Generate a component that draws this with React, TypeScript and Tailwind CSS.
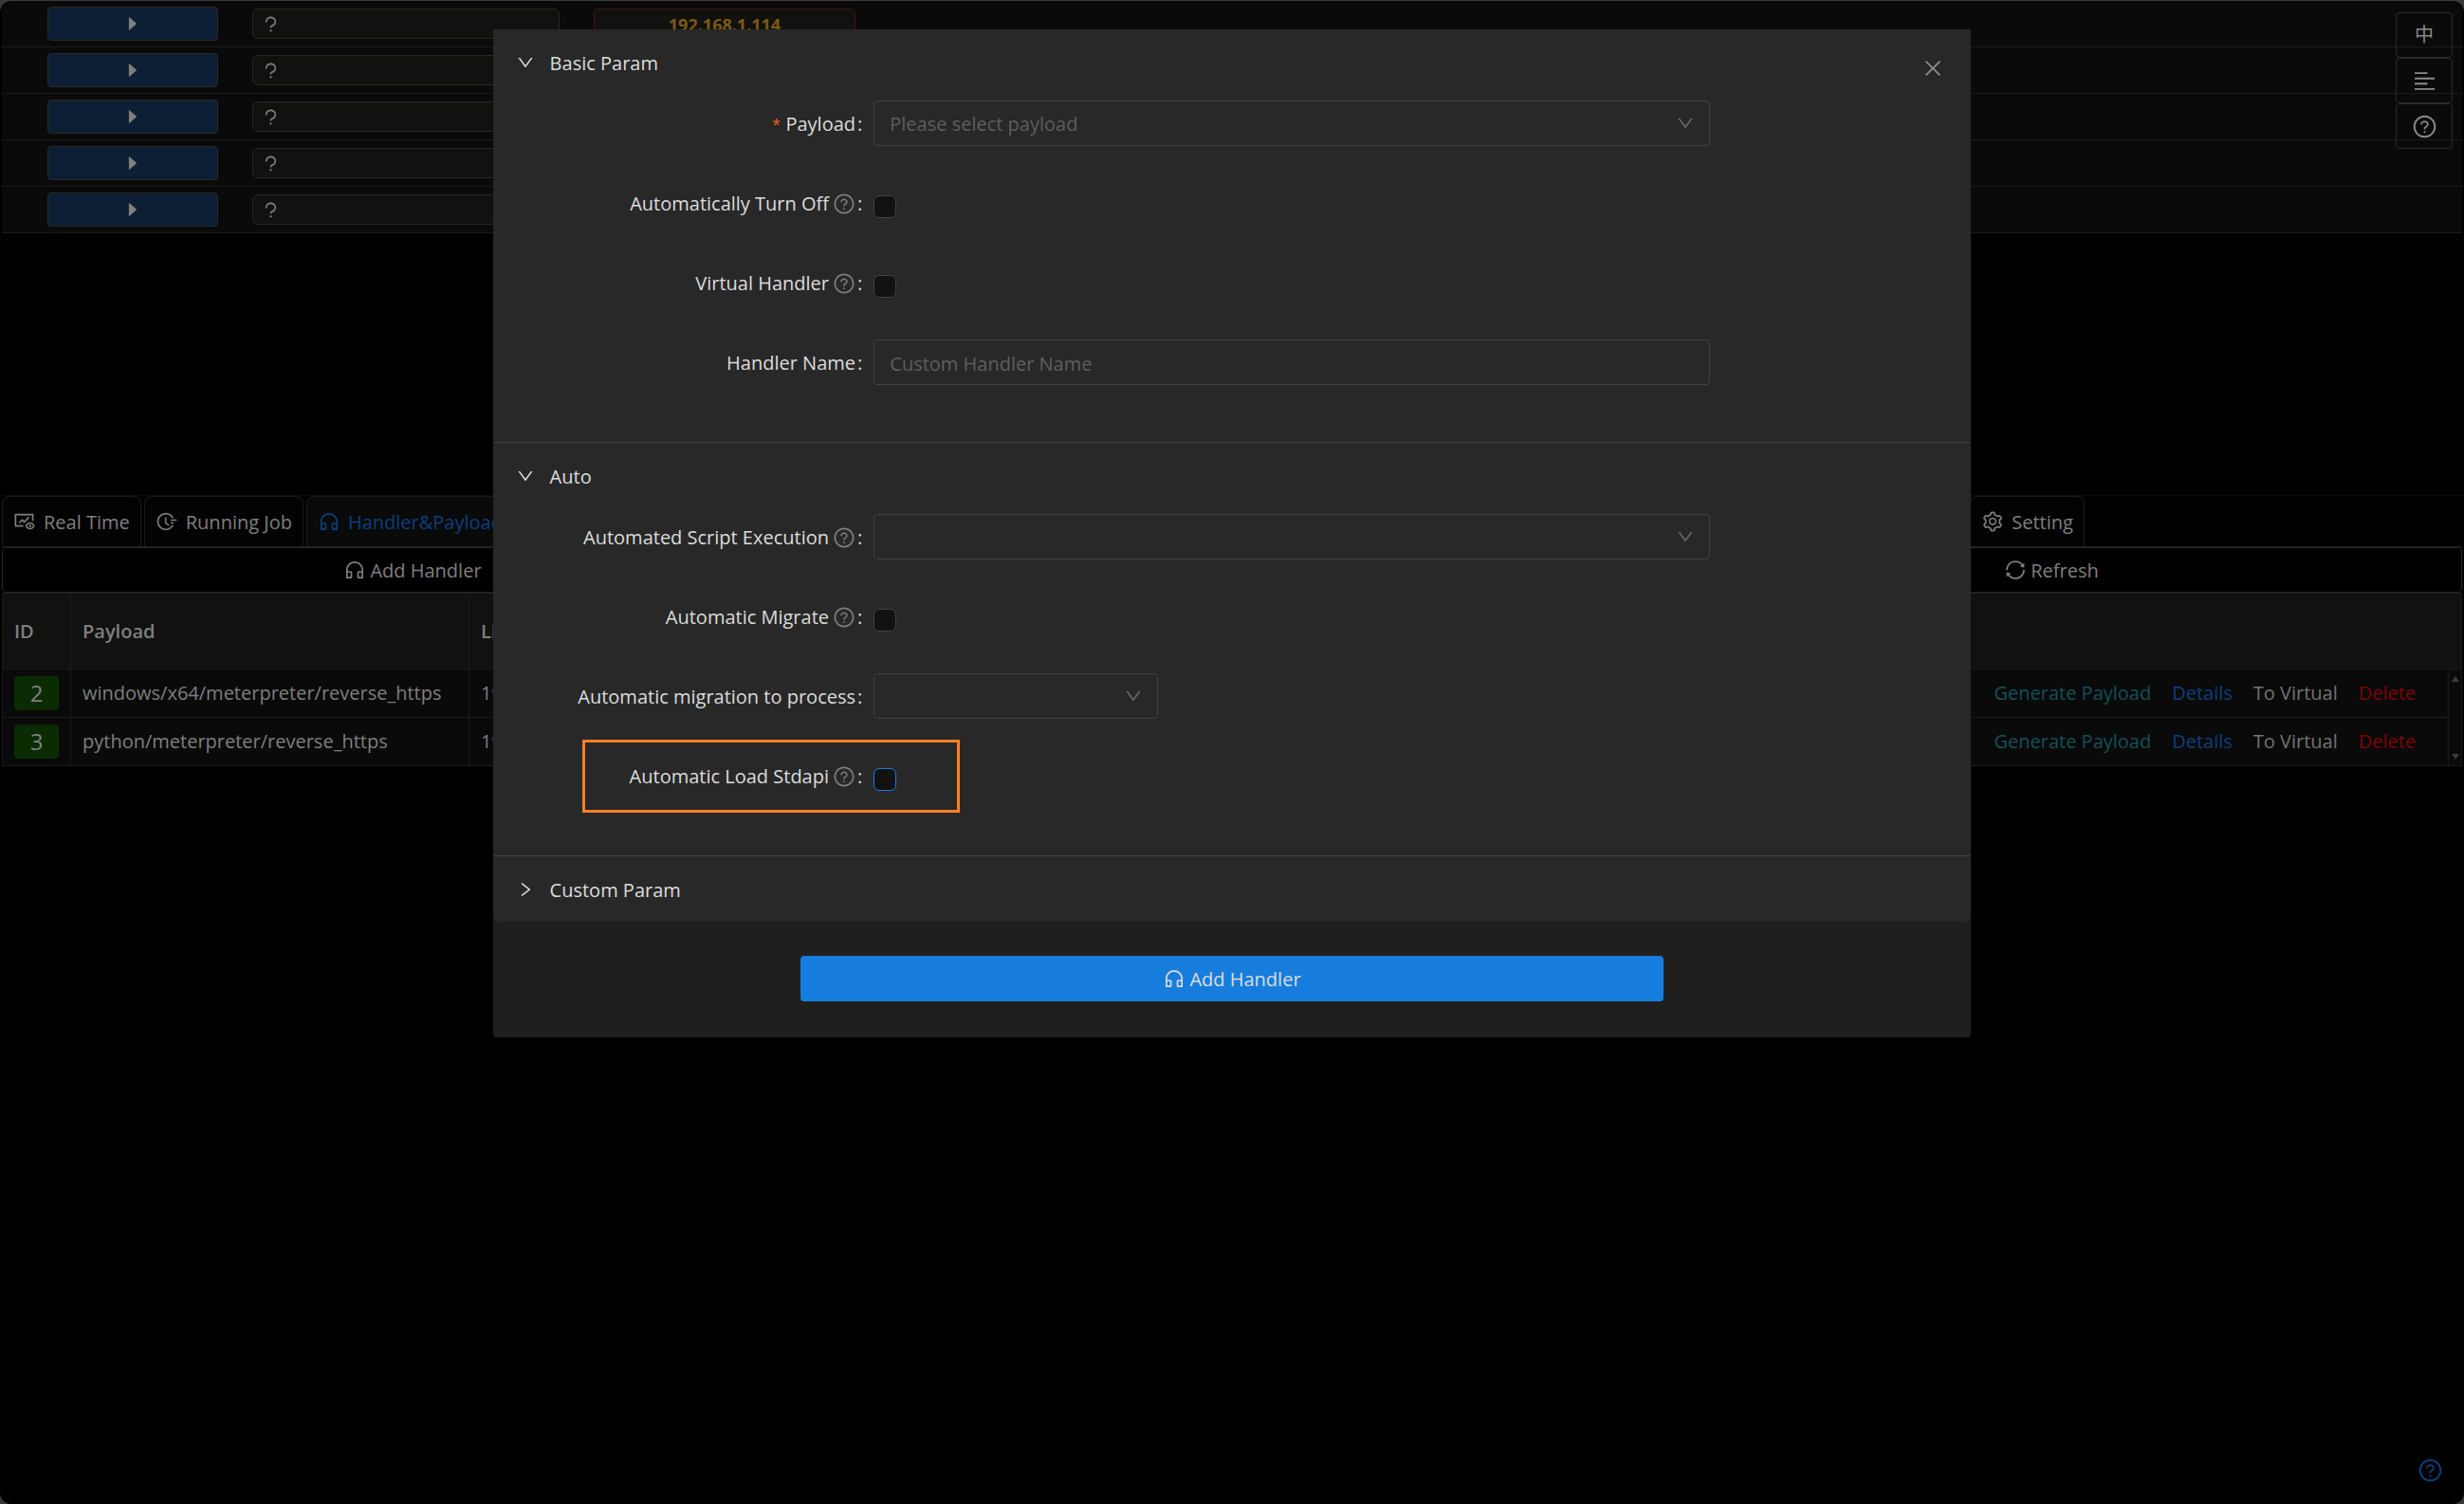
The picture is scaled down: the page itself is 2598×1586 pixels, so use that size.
import React, { useState } from 'react';
import {
  AiFillCaretRight,
  AiOutlineAlignLeft,
  AiOutlineClose,
  AiOutlineCustomerService,
  AiOutlineDown,
  AiOutlineFieldTime,
  AiOutlineFundView,
  AiOutlineQuestion,
  AiOutlineQuestionCircle,
  AiOutlineRight,
  AiOutlineSetting,
  AiOutlineSync,
} from 'react-icons/ai';

interface Handler {
  id: number;
  payload: string;
  lhost: string;
}

const hostRows = [{ ip: '192.168.1.114' }, {}, {}, {}, {}] as { ip?: string }[];

const handlers: Handler[] = [
  { id: 2, payload: 'windows/x64/meterpreter/reverse_https', lhost: '192' },
  { id: 3, payload: 'python/meterpreter/reverse_https', lhost: '192' },
];

const HostTable = () => (
  <section className="min-h-[521px]">
    {hostRows.map((row, idx) => (
      <div key={idx} className="flex h-[49px] items-center border-b border-[#1b1b1b] bg-[#0a0a0a] pl-12">
        <button
          aria-label="Run"
          className="flex h-9 w-[180px] items-center justify-center rounded-sm border border-[#2a2927] bg-[#0c1f34] text-[#7f7f7f]"
        >
          <AiFillCaretRight className="h-5 w-5" />
        </button>
        <div className="ml-9 flex h-8 w-[324px] items-center rounded-md border border-[#272727] bg-[#11110f] pl-2 text-[#7f7f7f]">
          <AiOutlineQuestion className="h-[21px] w-[21px]" />
        </div>
        {row.ip && (
          <div className="ml-9 flex h-8 w-[276px] items-center justify-center rounded-md border border-[#431510] bg-[#11110f] pt-0.5 text-lg font-bold text-[#7c5914]">
            {row.ip}
          </div>
        )}
      </div>
    ))}
  </section>
);

interface TabProps {
  icon: React.ReactNode;
  title: string;
  active?: boolean;
}

const Tab = ({ icon, title, active }: TabProps) => (
  <button
    className={`flex h-[53px] items-center gap-2 whitespace-nowrap rounded-t-lg border border-b-0 border-[#1b1b1b] px-[11px] ${
      active ? 'bg-[#0a0a0a] text-[#0c3f7c]' : 'bg-[#030303] text-[#7f7f7f]'
    }`}
  >
    {icon}
    <span className="pt-0.5">{title}</span>
  </button>
);

const TabBar = () => (
  <nav className="flex border-b border-t border-b-[#1f1f1f] border-t-[#0c0c0c]">
    <div className="flex w-4/5 gap-[3px]">
      <Tab icon={<AiOutlineFundView className="h-6 w-6" />} title="Real Time" />
      <Tab icon={<AiOutlineFieldTime className="h-6 w-6" />} title="Running Job" />
      <Tab icon={<AiOutlineCustomerService className="h-6 w-6" />} title="Handler&amp;Payload" active />
    </div>
    <Tab icon={<AiOutlineSetting className="h-6 w-6" />} title="Setting" />
  </nav>
);

const Toolbar = () => (
  <div className="grid h-12 grid-cols-3 rounded-sm border border-[#272727] text-[#7f7f7f]">
    <button className="flex items-center justify-center gap-1">
      <AiOutlineCustomerService className="h-6 w-6" />
      <span className="pt-0.5">Add Handler</span>
    </button>
    <button className="col-start-3 flex items-center justify-center gap-1">
      <AiOutlineSync className="h-6 w-6" />
      <span className="pt-0.5">Refresh</span>
    </button>
  </div>
);

const HandlerTable = () => (
  <table className="w-full table-fixed border-collapse border border-[#1b1b1b] bg-[#0a0a0a] text-[#7f7f7f]">
    <colgroup>
      <col className="w-[72px]" />
      <col className="w-[420px]" />
      <col />
      <col className="w-[491px]" />
      <col className="w-[14px]" />
    </colgroup>
    <thead className="bg-[#11110f]">
      <tr className="h-20 border-b border-[#1b1b1b] text-left">
        <th className="border-r border-[#1b1b1b] px-3 font-semibold">ID</th>
        <th className="border-r border-[#1b1b1b] px-3 font-semibold">Payload</th>
        <th className="px-3 font-semibold">LH</th>
        <th></th>
        <th></th>
      </tr>
    </thead>
    <tbody>
      {handlers.map((h, idx) => (
        <tr key={h.id} className="h-[51px] border-b border-[#1b1b1b]">
          <td className="border-r border-[#1b1b1b] px-3">
            <span className="flex h-9 items-center justify-center rounded-sm bg-[#0b2b03] text-2xl">{h.id}</span>
          </td>
          <td className="whitespace-nowrap border-r border-[#1b1b1b] px-3">{h.payload}</td>
          <td className="px-3">{h.lhost}</td>
          <td className="px-3">
            <div className="flex gap-[22px] whitespace-nowrap">
              <a href="#generate" className="text-[#125058]">Generate Payload</a>
              <a href="#details" className="text-[#0c3f7c]">Details</a>
              <a href="#virtual" className="text-[#737373]">To Virtual</a>
              <a href="#delete" className="text-[#7d0404]">Delete</a>
            </div>
          </td>
          {idx === 0 && (
            <td rowSpan={2} className="border-l border-[#1b1b1b]">
              <div className="flex h-[88px] flex-col items-center justify-between">
                <svg viewBox="0 0 8 6" className="h-1.5 w-2 fill-[#3a3a3a]">
                  <path d="M4 0 8 6H0Z" />
                </svg>
                <svg viewBox="0 0 8 6" className="h-1.5 w-2 fill-[#3a3a3a]">
                  <path d="M0 0H8L4 6Z" />
                </svg>
              </div>
            </td>
          )}
        </tr>
      ))}
    </tbody>
  </table>
);

interface PanelProps {
  title: string;
  defaultOpen?: boolean;
  children?: React.ReactNode;
}

const Panel = ({ title, defaultOpen = false, children }: PanelProps) => {
  const [open, setOpen] = useState(defaultOpen);

  return (
    <section className="border-b border-[#434343] last:border-b-0">
      <button onClick={() => setOpen(!open)} className="flex h-[69px] w-full items-center gap-4 px-6">
        {open ? <AiOutlineDown className="h-5 w-5" /> : <AiOutlineRight className="h-5 w-5" />}
        <span className="pt-0.5">{title}</span>
      </button>
      {open && children && <div className="px-6 pb-6 pt-1.5">{children}</div>}
    </section>
  );
};

interface FieldProps {
  id: string;
  label: string;
  required?: boolean;
  tip?: boolean;
  marked?: boolean;
  children: React.ReactNode;
}

const Field = ({ id, label, required, tip, marked, children }: FieldProps) => (
  <div className="relative mb-9 flex h-12">
    <label htmlFor={id} className="flex w-1/4 items-center justify-end whitespace-nowrap pr-3 pt-0.5">
      {required && <span className="mr-1 pt-2 font-['Liberation_Mono'] text-[#e8641b]">*</span>}
      {label}
      {tip && <AiOutlineQuestionCircle className="ml-1 h-6 w-6 text-[#7c7c7c]" />}
      <span className="ml-0.5">:</span>
    </label>
    <div className="w-7/12">{children}</div>
    {marked && <div className="pointer-events-none absolute -top-3.5 left-[70px] h-[77px] w-[398px] border-3 border-[#ff7f27]" />}
  </div>
);

const SelectBox = ({ id, placeholder = '', width = 'w-full' }: { id: string; placeholder?: string; width?: string }) => (
  <div className={`relative ${width}`}>
    <select
      id={id}
      className="h-12 w-full appearance-none rounded-sm border border-[#434343] bg-transparent px-4 pt-0.5 text-[#5e5e5e] outline-none"
    >
      <option>{placeholder}</option>
    </select>
    <AiOutlineDown className="pointer-events-none absolute right-4 top-3.5 h-5 w-5 text-[#6b6b6b]" />
  </div>
);

const CheckBox = ({ id, focused }: { id: string; focused?: boolean }) => (
  <input
    id={id}
    type="checkbox"
    className={`mt-4 block h-6 w-6 appearance-none rounded-md border bg-[#121212] checked:bg-[#177ddc] ${
      focused ? 'border-[#177ddc]' : 'border-[#434343]'
    }`}
  />
);

const AddHandlerModal = () => (
  <div role="dialog" className="relative w-3/5 rounded-sm bg-[#1f1f1f] text-[#dcdcdc]">
    <button aria-label="Close" className="absolute right-7 top-[29px] text-[#8a8a8a]">
      <AiOutlineClose className="h-6 w-6" />
    </button>
    <div className="rounded-b-lg bg-[#282828]">
      <Panel title="Basic Param" defaultOpen>
        <Field id="payload" label="Payload" required>
          <SelectBox id="payload" placeholder="Please select payload" />
        </Field>
        <Field id="turn-off" label="Automatically Turn Off" tip>
          <CheckBox id="turn-off" />
        </Field>
        <Field id="virtual" label="Virtual Handler" tip>
          <CheckBox id="virtual" />
        </Field>
        <Field id="name" label="Handler Name">
          <input
            id="name"
            type="text"
            placeholder="Custom Handler Name"
            className="h-12 w-full rounded-sm border border-[#434343] bg-transparent px-4 pt-0.5 outline-none placeholder:text-[#5e5e5e]"
          />
        </Field>
      </Panel>
      <Panel title="Auto" defaultOpen>
        <Field id="script" label="Automated Script Execution" tip>
          <SelectBox id="script" />
        </Field>
        <Field id="migrate" label="Automatic Migrate" tip>
          <CheckBox id="migrate" />
        </Field>
        <Field id="process" label="Automatic migration to process">
          <SelectBox id="process" width="w-[300px]" />
        </Field>
        <Field id="stdapi" label="Automatic Load Stdapi" tip marked>
          <CheckBox id="stdapi" focused />
        </Field>
      </Panel>
      <Panel title="Custom Param" />
    </div>
    <div className="flex justify-center pb-[38px] pt-9">
      <button className="flex h-12 w-7/12 items-center justify-center gap-1 rounded-sm bg-[#177ddc]">
        <AiOutlineCustomerService className="h-6 w-6" />
        <span className="pt-0.5">Add Handler</span>
      </button>
    </div>
  </div>
);

const sideButton = 'flex h-12 w-[60px] items-center justify-center rounded-sm border border-[#2a2a2a] text-[#8a8a8a]';

export default function App() {
  return (
    <div className="flex min-h-screen bg-[#3a3a3a] pt-px font-['Open_Sans','Noto_Sans_CJK_SC',sans-serif] text-[20px] leading-8">
      <div className="relative w-full overflow-hidden rounded-xl bg-black">
        <main className="px-0.5">
          <HostTable />
          <TabBar />
          <Toolbar />
          <HandlerTable />
        </main>

        <div className="absolute right-3 top-3 flex flex-col">
          <button className={sideButton}>中</button>
          <button className={sideButton} aria-label="Menu">
            <AiOutlineAlignLeft className="h-[27px] w-[27px]" />
          </button>
          <button className={sideButton} aria-label="Help">
            <AiOutlineQuestionCircle className="h-[27px] w-[27px]" />
          </button>
        </div>

        <div className="absolute inset-x-0 top-[30px] flex justify-center">
          <AddHandlerModal />
        </div>

        <button aria-label="Support" className="absolute bottom-[22px] right-[22px] text-[#0c3f7c]">
          <AiOutlineQuestionCircle className="h-[27px] w-[27px]" />
        </button>
      </div>
    </div>
  );
}
